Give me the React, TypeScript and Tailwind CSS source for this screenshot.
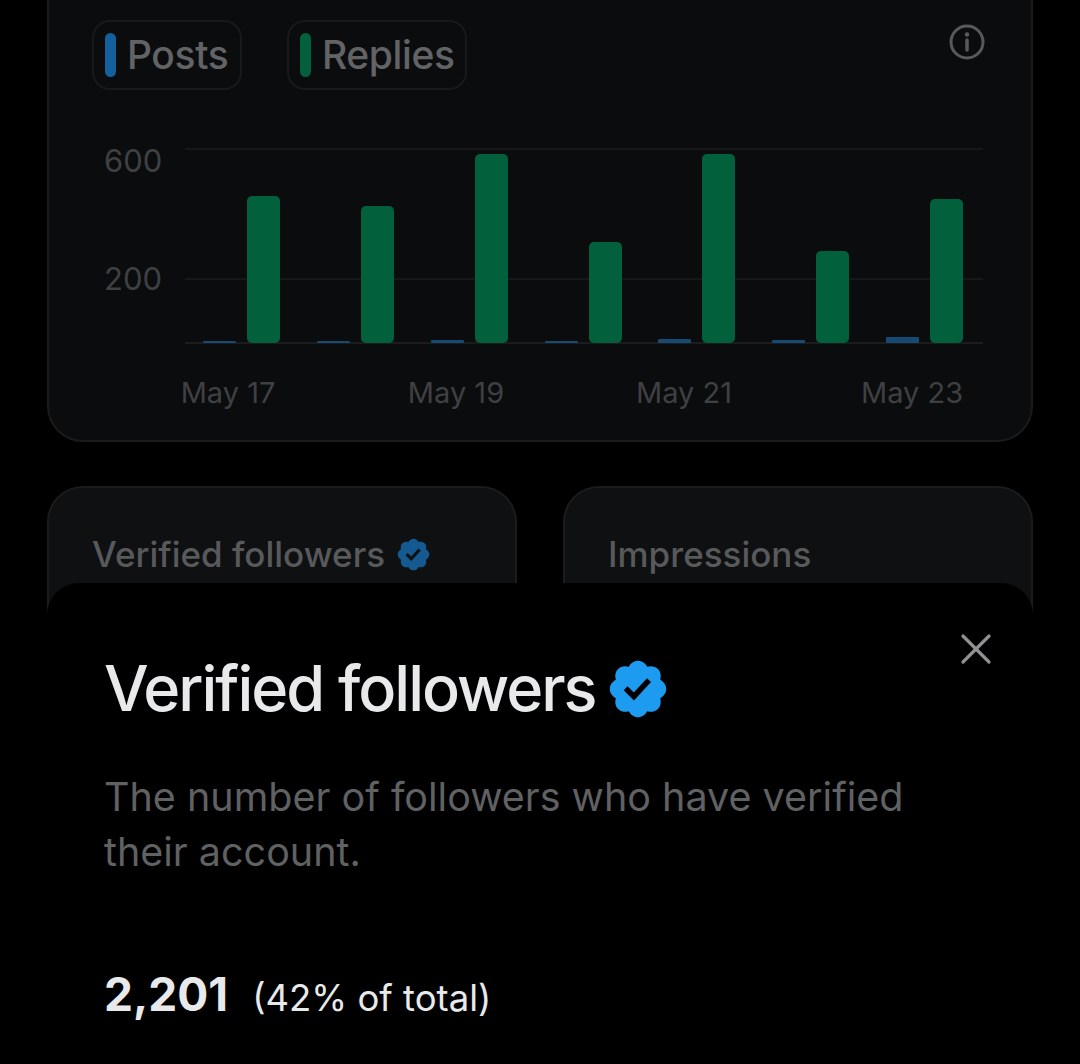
import { X } from "lucide-react";

const greenBars = [
  { x: 62, top: 48 },
  { x: 176, top: 58 },
  { x: 290, top: 6 },
  { x: 404, top: 94 },
  { x: 517, top: 6 },
  { x: 631, top: 103 },
  { x: 745, top: 51 },
];

const blueBars = [
  { x: 18, h: 2 },
  { x: 132, h: 2 },
  { x: 246, h: 3 },
  { x: 360, h: 2 },
  { x: 473, h: 4 },
  { x: 587, h: 3 },
  { x: 701, h: 6 },
];

const BADGE =
  "M22.25 12c0-1.43-.88-2.67-2.19-3.34.46-1.39.2-2.9-.81-3.91s-2.52-1.27-3.91-.81c-.66-1.31-1.91-2.19-3.34-2.19s-2.67.88-3.33 2.19c-1.4-.46-2.91-.2-3.92.81s-1.26 2.52-.8 3.91c-1.31.67-2.2 1.91-2.2 3.34s.89 2.67 2.2 3.34c-.46 1.39-.21 2.9.8 3.91s2.52 1.26 3.91.81c.67 1.31 1.91 2.19 3.34 2.19s2.68-.88 3.34-2.19c1.39.45 2.9.2 3.91-.81s1.27-2.52.81-3.91c1.31-.67 2.19-1.91 2.19-3.34zm-11.71 4.2L6.8 12.46l1.41-1.42 2.26 2.26 4.8-5.23 1.47 1.36-6.2 6.77z";

function Badge({ className, color }: { className: string; color: string }) {
  return (
    <svg viewBox="0 0 24 24" className={className}>
      <path d={BADGE} fill={color} />
    </svg>
  );
}

function Legend({ label, swatch, width }: { label: string; swatch: string; width: string }) {
  return (
    <div className={`flex h-[70px] items-center gap-[11px] rounded-[18px] border-2 border-[#18191b] pl-[11px] ${width}`}>
      <span className={`h-[44px] w-[11px] rounded-full ${swatch}`} />
      <span className="-mt-[1px] text-[39px] leading-none font-medium tracking-[-0.4px] text-[#626365]">{label}</span>
    </div>
  );
}

function StatCard({ children }: { children: React.ReactNode }) {
  return (
    <div className="h-[140px] flex-1 rounded-t-[36px] border-2 border-[#1a1b1d] bg-[#0f1012] pl-[43px] pt-[46px]">
      <div className="flex items-center gap-[10px] text-[35px] leading-10 font-medium text-[#58595b]">
        {children}
      </div>
    </div>
  );
}

export default function App() {
  return (
    <div className="relative h-[1064px] w-[1080px] overflow-hidden bg-black px-[47px] font-['Inter',sans-serif]">
      <div className="-mt-[40px] h-[482px] rounded-[36px] border-2 border-[#1a1b1d] bg-[#0b0c0e] px-[43px] pt-[58px]">
        <div className="flex items-start justify-between">
          <div className="flex gap-[45px]">
            <Legend label="Posts" swatch="bg-[#14609c]" width="w-[150px]" />
            <Legend label="Replies" swatch="bg-[#03603d]" width="w-[180px]" />
          </div>
          <svg viewBox="0 0 36 36" className="mt-[4px] mr-[3px] h-[36px] w-[36px] text-[#58595b]" fill="none" stroke="currentColor">
            <circle cx="18" cy="18" r="16" strokeWidth="3" />
            <path d="M18 16v10" strokeWidth="3.5" strokeLinecap="round" />
            <circle cx="18" cy="10.5" r="2.2" fill="currentColor" stroke="none" />
          </svg>
        </div>

        <div className="mt-[58px] flex">
          <div className="-mt-[5px] w-[93px] shrink-0 text-[31px] leading-9 text-[#3f4042]">
            <div className="pl-[12px]">600</div>
            <div className="mt-[82px] pl-[12px]">200</div>
          </div>
          <svg width="798" height="196" viewBox="0 0 798 196" className="shrink-0">
            <rect x="0" y="0" width="798" height="2" fill="#17181a" />
            <rect x="0" y="130" width="798" height="2" fill="#17181a" />
            <rect x="0" y="194" width="798" height="2" fill="#1c1c1e" />
            {blueBars.map((b) => (
              <rect key={b.x} x={b.x} y={195 - b.h} width="33" height={b.h} rx="1" fill="#164a73" />
            ))}
            {greenBars.map((b) => (
              <rect key={b.x} x={b.x} y={b.top} width="33" height={195 - b.top} rx="5" fill="#03603d" />
            ))}
          </svg>
        </div>

        <div className="mt-[31px] flex pl-[22px] text-[29px] leading-9 text-[#3f4042]">
          {["May 17", "May 19", "May 21", "May 23"].map((d) => (
            <div key={d} className="w-[228px] shrink-0 text-center">
              {d}
            </div>
          ))}
        </div>
      </div>

      <div className="mt-[44px] flex gap-[46px]">
        <StatCard>
          Verified followers
          <Badge className="h-[37px] w-[37px]" color="#14598f" />
        </StatCard>
        <StatCard>Impressions</StatCard>
      </div>

      {/* bottom sheet over the page */}
      <div className="absolute top-[583px] right-[47px] bottom-0 left-[47px] rounded-t-[32px] bg-black pl-[57px] pr-[44px]">
        <X className="absolute top-[40px] right-[31px] h-[52px] w-[52px] text-[#8f9193]" strokeWidth={1.5} />
        <div className="mt-[70px] flex items-center gap-[9px] text-[63px] leading-[70px] font-medium tracking-[-2px] text-[#e7e9ea]">
          Verified followers
          <Badge className="mt-[2px] h-[66px] w-[66px]" color="#1d9bf0" />
        </div>
        <p className="mt-[47px] w-[830px] text-[39.5px] leading-[55px] text-[#5f6163]">
          The number of followers who have verified their account.
        </p>
        <div className="mt-[87px] flex items-baseline gap-[24px] text-[#e7e9ea]">
          <span className="text-[46px] leading-[54px] font-bold">2,201</span>
          <span className="text-[36.5px] leading-[54px]">(42% of total)</span>
        </div>
      </div>
    </div>
  );
}
